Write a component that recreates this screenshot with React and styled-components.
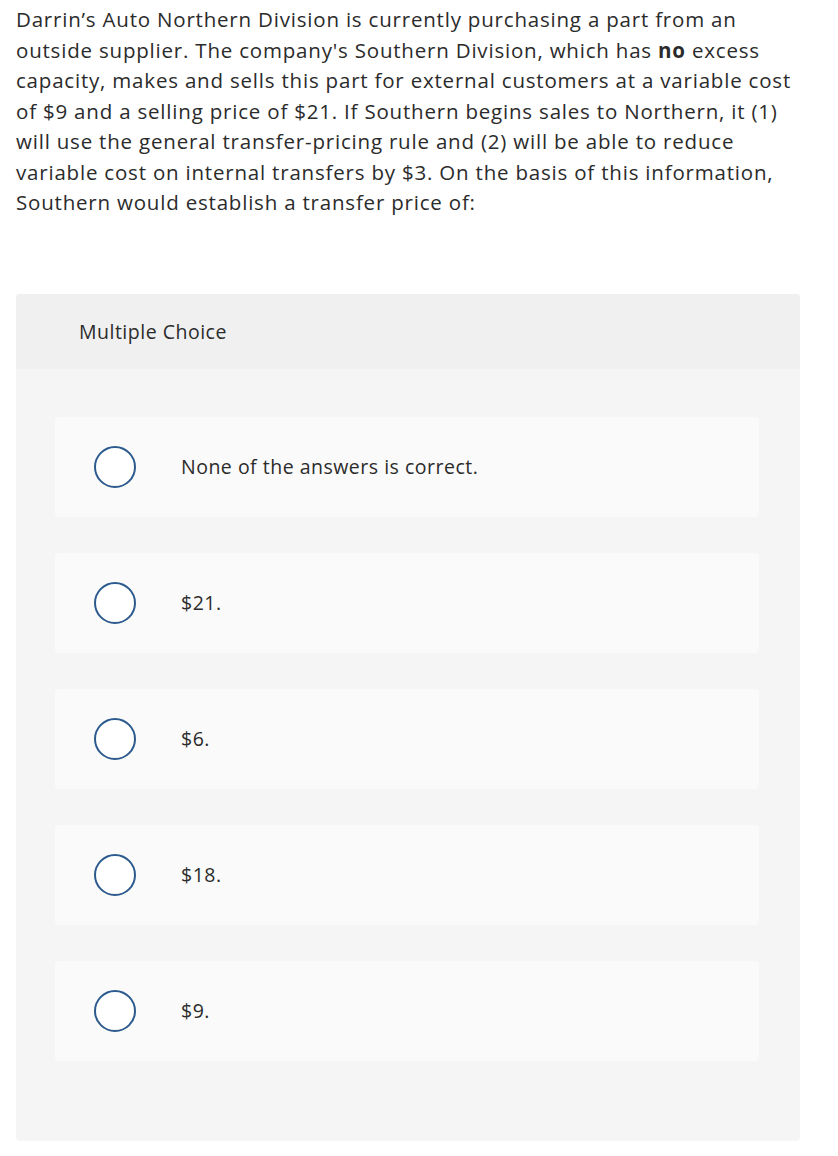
import React from "react";
import styled, { createGlobalStyle } from "styled-components";

const GlobalStyle = createGlobalStyle`
  body {
    margin: 0;
    background: #ffffff;
    font-family: "Open Sans", Inter, sans-serif;
    color: #2b2b2b;
  }
`;

const Page = styled.div`
  padding: 4px 38px 14px 16px;
`;

const Question = styled.p`
  margin: 0;
  max-width: 782px;
  font-size: 20.5px;
  line-height: 30.5px;
  letter-spacing: 0.8px;
  b {
    font-weight: 700;
  }
`;

const Panel = styled.section`
  margin-top: 76px;
  background: #f5f5f5;
  border-radius: 4px;
  overflow: hidden;
`;

const PanelHeader = styled.div`
  height: 75px;
  background: #f0f0f0;
  display: flex;
  align-items: center;
  padding-left: 63px;
  font-size: 19.5px;
  letter-spacing: 0.5px;
`;

const Choices = styled.div`
  display: flex;
  flex-direction: column;
  gap: 36px;
  padding: 48px 41px 80px 39px;
`;

const Choice = styled.label`
  height: 100px;
  background: #fafafa;
  border-radius: 4px;
  display: flex;
  align-items: center;
  padding-left: 39px;
  font-size: 19.5px;
  letter-spacing: 0.5px;
  cursor: pointer;
`;

const Radio = styled.span`
  width: 38px;
  height: 38px;
  border: 2px solid #2c5a8c;
  border-radius: 50%;
  background: #ffffff;
  flex-shrink: 0;
  margin-right: 45px;
`;

const answers = [
  "None of the answers is correct.",
  "$21.",
  "$6.",
  "$18.",
  "$9.",
];

export default function App() {
  return (
    <>
      <GlobalStyle />
      <Page>
        <Question>
          Darrin’s Auto Northern Division is currently purchasing a part from an
          outside supplier. The company's Southern Division, which has <b>no</b>{" "}
          excess capacity, makes and sells this part for external customers at a
          variable cost of $9 and a selling price of $21. If Southern begins
          sales to Northern, it (1) will use the general transfer-pricing rule
          and (2) will be able to reduce variable cost on internal transfers by
          $3. On the basis of this information, Southern would establish a
          transfer price of:
        </Question>
        <Panel>
          <PanelHeader>Multiple Choice</PanelHeader>
          <Choices>
            {answers.map((a) => (
              <Choice key={a}>
                <Radio />
                {a}
              </Choice>
            ))}
          </Choices>
        </Panel>
      </Page>
    </>
  );
}
